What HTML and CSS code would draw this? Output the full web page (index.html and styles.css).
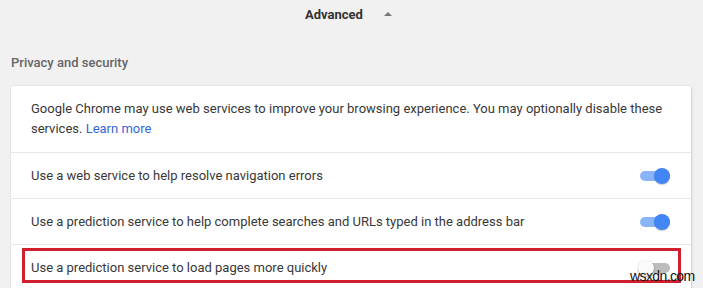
FILE: index.html
```html
<!DOCTYPE html>
<html>
<head>
<meta charset="utf-8">
<link rel="stylesheet" href="styles.css">
</head>
<body>
<div class="advanced">
  <span class="advanced-label">Advanced</span>
  <span class="arrow"></span>
</div>
<div class="section-title">Privacy and security</div>
<div class="card">
  <div class="intro">Google Chrome may use web services to improve your browsing experience. You may optionally disable these services.&nbsp;<a class="link" href="#">Learn more</a></div>
  <div class="row">
    <span class="label">Use a web service to help resolve navigation errors</span>
    <span class="toggle on"><span class="track"></span><span class="knob"></span></span>
  </div>
  <div class="row">
    <span class="label">Use a prediction service to help complete searches and URLs typed in the address bar</span>
    <span class="toggle on"><span class="track"></span><span class="knob"></span></span>
  </div>
  <div class="row last">
    <span class="label">Use a prediction service to load pages more quickly</span>
    <span class="toggle"><span class="track"></span><span class="knob"></span></span>
    <span class="highlight"></span>
  </div>
</div>
<div class="watermark">wsxdn.com</div>
</body>
</html>
```
FILE: styles.css
```css
html, body {
  margin: 0;
  padding: 0;
}
body {
  background: #f1f1f1;
  font-family: Roboto, "Liberation Sans", Arial, sans-serif;
  font-size: 13px;
  color: #383838;
  width: 703px;
  height: 288px;
  overflow: hidden;
  position: relative;
}
.advanced {
  height: 28px;
  display: flex;
  align-items: center;
  padding-left: 305px;
  gap: 21px;
}
.advanced-label {
  font-weight: 700;
  color: #333;
  font-size: 13px;
}
.arrow {
  width: 0;
  height: 0;
  border-left: 4px solid transparent;
  border-right: 4px solid transparent;
  border-bottom: 4px solid #777;
  margin-top: -1px;
}
.section-title {
  padding: 26px 0 0 11px;
  height: 32px;
  box-sizing: border-box;
  line-height: 18px;
  font-weight: 500;
  color: #666;
}
.card {
  margin: 26px 12px 0 11px;
  background: #fff;
  box-shadow: 0 0 2px rgba(0,0,0,0.12), 1px 1px 3px rgba(0,0,0,0.1);
  border-radius: 2px;
}
.intro {
  padding: 13px 20px 13px 20px;
  line-height: 20px;
  border-bottom: 1px solid #e8e8e8;
}
.link {
  color: #3367d6;
  text-decoration: none;
}
.row {
  height: 45px;
  display: flex;
  align-items: center;
  justify-content: space-between;
  padding: 0 21px 0 20px;
  border-bottom: 1px solid #e8e8e8;
  position: relative;
}
.row.last {
  border-bottom: none;
}
.label {
  line-height: 20px;
}
.toggle {
  position: relative;
  width: 30px;
  height: 16px;
  flex: none;
}
.track {
  position: absolute;
  left: 0;
  top: 3px;
  width: 30px;
  height: 10px;
  border-radius: 5px;
  background: #bdbdbd;
}
.toggle.on .track {
  background: #8ab4f8;
}
.knob {
  position: absolute;
  top: 0;
  left: -2px;
  width: 16px;
  height: 16px;
  border-radius: 50%;
  background: #fafafa;
  box-shadow: 0 1px 2px rgba(0,0,0,0.35);
}
.toggle.on .knob {
  left: auto;
  right: 0;
  background: #4285f4;
  box-shadow: 0 1px 1px rgba(0,0,0,0.2);
}
.highlight {
  position: absolute;
  left: 11px;
  right: 10px;
  top: 3px;
  height: 35px;
  box-sizing: border-box;
  border: 3px solid #d21f2f;
  pointer-events: none;
}
.watermark {
  position: absolute;
  left: 630px;
  top: 268px;
  font-family: "Liberation Sans", Arial, sans-serif;
  font-size: 14px;
  letter-spacing: -0.6px;
  line-height: 16px;
  color: #111;
  z-index: 5;
}
```
